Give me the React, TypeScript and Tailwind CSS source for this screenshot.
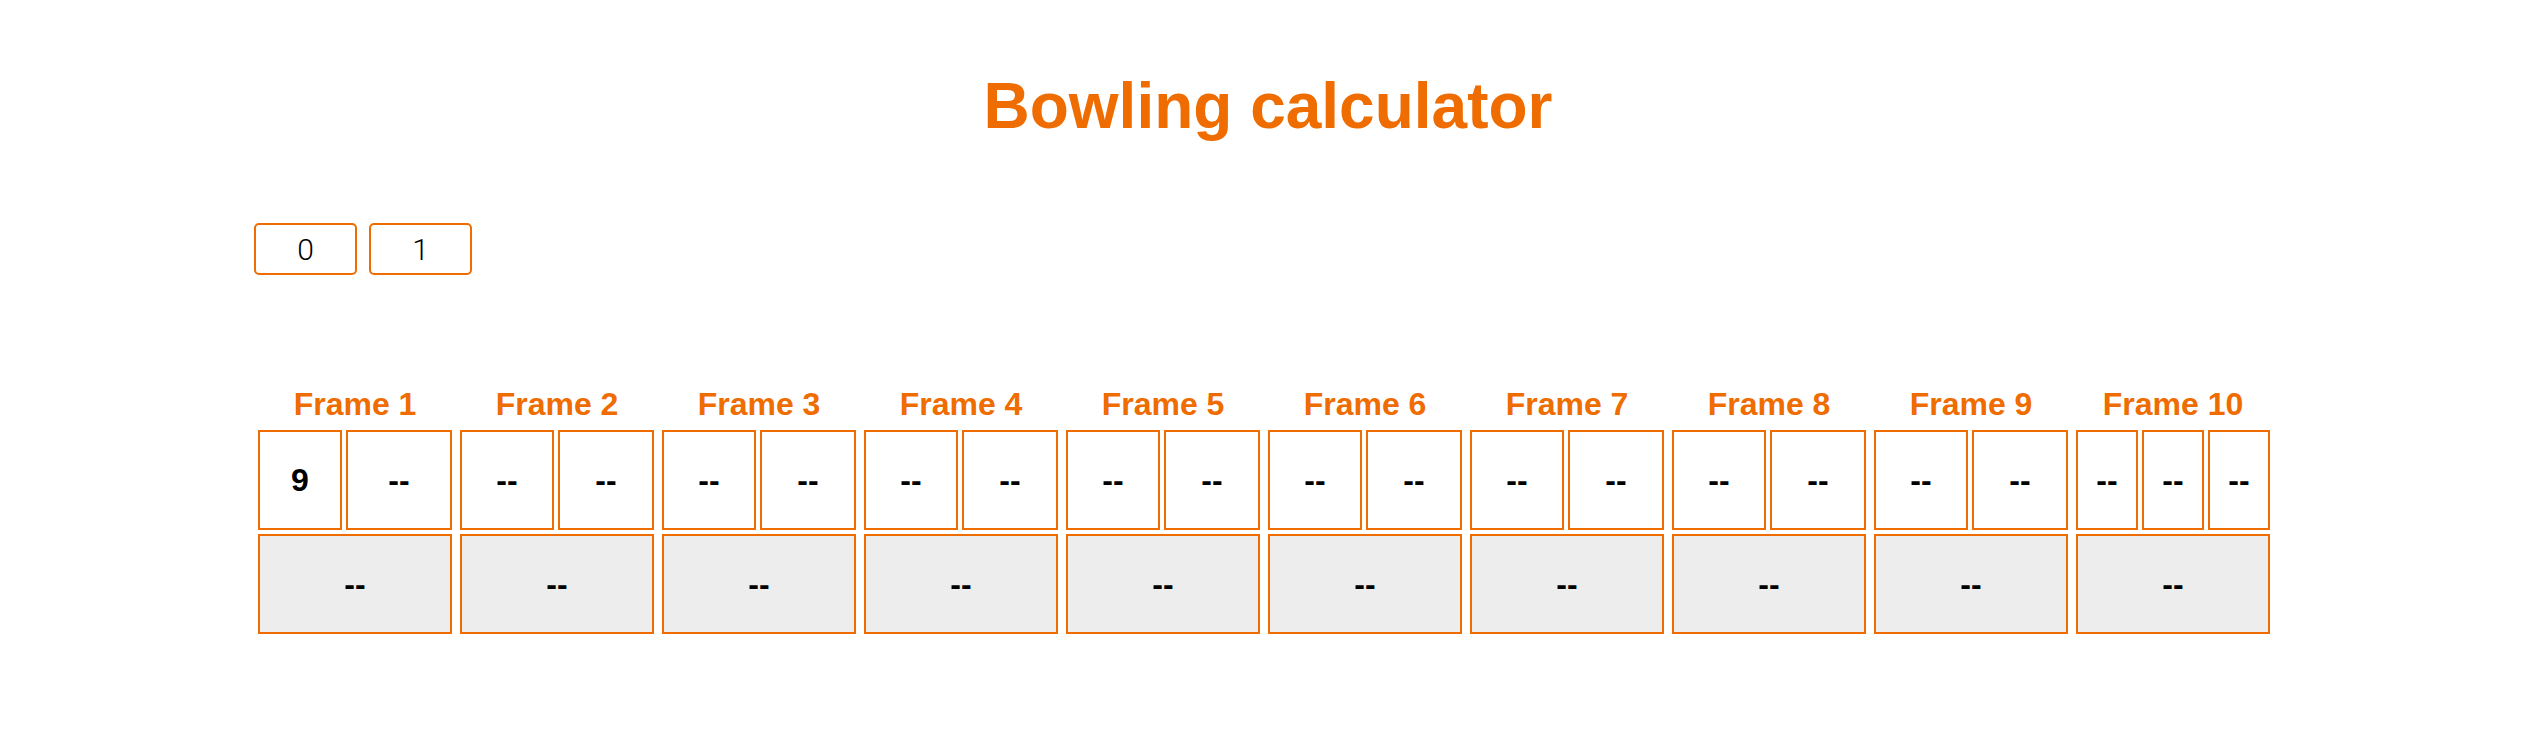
const frames: { rolls: string[]; widths: string[]; total: string }[] = [
  { rolls: ["9", "--"], widths: ["w-[84px]", "w-[106px]"], total: "--" },
  ...Array.from({ length: 8 }, () => ({
    rolls: ["--", "--"],
    widths: ["w-[94px]", "w-[96px]"],
    total: "--",
  })),
  { rolls: ["--", "--", "--"], widths: ["w-[62px]", "w-[62px]", "w-[62px]"], total: "--" },
];

function Frame({ index, rolls, widths, total }: { index: number; rolls: string[]; widths: string[]; total: string }) {
  return (
    <div className="w-[194px] flex flex-col shrink-0">
      <h2 className="text-[32px] leading-none font-bold text-[#ef6c00] text-center pt-[2px]">
        Frame {index + 1}
      </h2>
      <div className="mt-[10px] flex gap-1">
        {rolls.map((roll, i) => (
          <div
            key={i}
            className={`${widths[i]} h-[100px] border-2 border-[#ef6c00] bg-white flex items-center justify-center text-[32px] font-bold text-black`}
          >
            {roll}
          </div>
        ))}
      </div>
      <div className="mt-1 h-[100px] border-2 border-[#ef6c00] bg-[#ededed] flex items-center justify-center text-[32px] font-bold text-black">
        {total}
      </div>
    </div>
  );
}

export default function App() {
  return (
    <div
      className="w-full min-h-[731px] bg-white"
      style={{ fontFamily: '"Liberation Sans", Arial, Helvetica, sans-serif' }}
    >
      <div className="w-[2024px] mx-auto pt-[74px]">
        {/* Title */}
        <h1 className="text-[64px] leading-none font-bold text-[#ef6c00] text-center pl-[4px]">
          Bowling calculator
        </h1>

        {/* Pin buttons */}
        <div className="mt-[85px] flex gap-3">
          {["0", "1"].map((n) => (
            <button
              key={n}
              className="w-[103px] h-[52px] border-2 border-[#ef6c00] rounded-[5px] bg-white flex items-center justify-center text-[30px] font-light text-black"
              style={{ fontFamily: 'Roboto, "Liberation Sans", sans-serif' }}
            >
              {n}
            </button>
          ))}
        </div>

        {/* Score sheet */}
        <div className="mt-[111px] ml-1 flex gap-2">
          {frames.map((f, i) => (
            <Frame key={i} index={i} rolls={f.rolls} widths={f.widths} total={f.total} />
          ))}
        </div>
      </div>
    </div>
  );
}
